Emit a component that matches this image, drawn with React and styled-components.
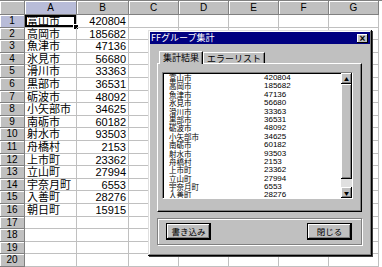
import React from "react";
import styled, { createGlobalStyle } from "styled-components";

const GlobalStyle = createGlobalStyle`
  html, body {
    margin: 0;
    padding: 0;
    background: #fff;
  }
  body {
    font-family: "Liberation Sans", "Noto Sans CJK JP", sans-serif;
    overflow: hidden;
  }
`;

const rows = [
  ["富山市", 420804],
  ["高岡市", 185682],
  ["魚津市", 47136],
  ["氷見市", 56680],
  ["滑川市", 33363],
  ["黒部市", 36531],
  ["砺波市", 48092],
  ["小矢部市", 34625],
  ["南砺市", 60182],
  ["射水市", 93503],
  ["舟橋村", 2153],
  ["上市町", 23362],
  ["立山町", 27994],
  ["宇奈月町", 6553],
  ["入善町", 28276],
  ["朝日町", 15915],
];

const columns = ["A", "B", "C", "D", "E", "F", "G"];

function App() {
  const sheetRows = Array.from({ length: 20 }, (_, i) => rows[i] || null);

  return (
    <Screen>
      <GlobalStyle />
      <Sheet>
        <Corner />
        {columns.map((c) => (
          <ColHead key={c} $active={c === "A"}>
            {c}
          </ColHead>
        ))}
        {sheetRows.map((r, i) => (
          <React.Fragment key={i}>
            <RowHead $active={i === 0}>{i + 1}</RowHead>
            <Cell $selected={i === 0}>{r ? r[0] : ""}</Cell>
            <Cell $num>{r ? r[1] : ""}</Cell>
            {[0, 1, 2, 3, 4].map((k) => (
              <Cell key={k} />
            ))}
          </React.Fragment>
        ))}
      </Sheet>

      <Dialog>
        <TitleBar>
          <span>FFグループ集計</span>
          <CloseButton>×</CloseButton>
        </TitleBar>
        <Body>
          <Tabs>
            <Tab $active>集計結果</Tab>
            <Tab>エラーリスト</Tab>
          </Tabs>
          <Panel>
            <ListBox>
              <ListItems>
                {rows.slice(0, 15).map(([name, n]) => (
                  <ListRow key={name}>
                    <span>{name}</span>
                    <span>{n}</span>
                  </ListRow>
                ))}
              </ListItems>
              <ScrollBar>
                <ArrowButton>▲</ArrowButton>
                <Track>
                  <Thumb />
                </Track>
                <ArrowButton>▼</ArrowButton>
              </ScrollBar>
            </ListBox>
          </Panel>
          <ButtonGroup>
            <Button>書き込み</Button>
            <Button>閉じる</Button>
          </ButtonGroup>
        </Body>
      </Dialog>
    </Screen>
  );
}

export default App;

// styles

const Screen = styled.div`
  position: relative;
  width: 382px;
  height: 267px;
  overflow: hidden;
  background: #fff;
`;

const Sheet = styled.div`
  display: grid;
  grid-template-columns: 25px 52px 52px repeat(5, 50px);
  grid-template-rows: 14px;
  grid-auto-rows: 12.6px;
  border-top: 1px solid #808080;
`;

const Corner = styled.div`
  background: #c0c0c0;
  border-right: 1px solid #808080;
  border-bottom: 1px solid #808080;
  box-shadow: inset 1px 1px #fff;
`;

const ColHead = styled.div`
  background: ${(p) => (p.$active ? "#b8bcd8" : "#c0c0c0")};
  border-right: 1px solid #808080;
  border-bottom: 1px solid #808080;
  box-shadow: inset 1px 1px #fff;
  font-size: 10px;
  line-height: 13px;
  text-align: center;
  color: #000;
`;

const RowHead = styled.div`
  background: ${(p) => (p.$active ? "#b8bcd8" : "#c0c0c0")};
  border-right: 1px solid #808080;
  border-bottom: 1px solid #808080;
  box-shadow: inset 1px 1px #fff;
  font-size: 10px;
  line-height: 12px;
  text-align: center;
  color: #000;
`;

const Cell = styled.div`
  position: relative;
  border-right: 1px solid #c0c0c0;
  border-bottom: 1px solid #c0c0c0;
  font-family: "Liberation Sans", "Noto Sans CJK JP", sans-serif;
  font-size: 11px;
  line-height: 12px;
  padding: 0 2px;
  text-align: ${(p) => (p.$num ? "right" : "left")};
  white-space: nowrap;
  color: #000;
  ${(p) =>
    p.$selected &&
    `
    box-shadow: inset 0 0 0 2px #000;
    &::after {
      content: "";
      position: absolute;
      right: -3px;
      bottom: -3px;
      width: 4px;
      height: 4px;
      background: #000;
      border: 1px solid #fff;
    }
  `}
`;

const Dialog = styled.div`
  position: absolute;
  left: 148px;
  top: 30px;
  width: 224px;
  height: 226px;
  box-sizing: border-box;
  padding: 2px;
  background: #c0c0c0;
  box-shadow: inset -1px -1px #000, inset 1px 1px #dfdfdf, inset -2px -2px #808080,
    inset 2px 2px #fff, 1px 1px 0 #404040;
  display: flex;
  flex-direction: column;
`;

const TitleBar = styled.div`
  height: 12px;
  background: #000080;
  color: #fff;
  display: flex;
  align-items: center;
  justify-content: space-between;
  padding: 0 2px 0 1px;
  font-size: 9px;
  font-family: "Noto Sans CJK JP", sans-serif;
  line-height: 12px;
`;

const CloseButton = styled.div`
  width: 11px;
  height: 9px;
  background: #c0c0c0;
  color: #000;
  font-family: "Liberation Sans", sans-serif;
  font-weight: bold;
  font-size: 10px;
  line-height: 9px;
  text-align: center;
  box-shadow: inset -1px -1px #000, inset 1px 1px #fff;
`;

const Body = styled.div`
  display: flex;
  flex-direction: column;
  padding: 8px 8px 0 7px;
  font-family: "Noto Sans CJK JP", sans-serif;
`;

const Tabs = styled.div`
  display: flex;
  height: 11px;
  padding-left: 2px;
  align-items: flex-end;
`;

const Tab = styled.div`
  position: relative;
  height: ${(p) => (p.$active ? "12px" : "10px")};
  margin-bottom: ${(p) => (p.$active ? "-1px" : "0")};
  padding: 0 3px;
  background: #c0c0c0;
  border-top: 1px solid #fff;
  border-left: 1px solid #fff;
  border-right: 1px solid #000;
  box-shadow: inset -1px 0 #808080;
  font-size: 9px;
  line-height: 11px;
  color: #000;
  z-index: ${(p) => (p.$active ? 1 : 0)};
`;

const Panel = styled.div`
  height: 149px;
  box-sizing: border-box;
  padding: 8px 8px 12px 4px;
  background: #c0c0c0;
  border-top: 1px solid #fff;
  border-left: 1px solid #fff;
  border-right: 1px solid #000;
  border-bottom: 1px solid #000;
  box-shadow: inset -1px -1px #808080;
`;

const ListBox = styled.div`
  display: flex;
  height: 100%;
  box-sizing: border-box;
  background: #fff;
  border-top: 1px solid #808080;
  border-left: 1px solid #808080;
  border-right: 1px solid #fff;
  border-bottom: 1px solid #fff;
  box-shadow: inset 1px 1px #000;
`;

const ListItems = styled.div`
  flex: 1;
  padding: 1px 0 0 6px;
  overflow: hidden;
`;

const ListRow = styled.div`
  display: grid;
  grid-template-columns: 95px 1fr;
  font-size: 7.5px;
  line-height: 8.4px;
  height: 8.4px;
  color: #000;
  span:last-child {
    font-family: "Liberation Sans", sans-serif;
    font-size: 8px;
  }
`;

const ScrollBar = styled.div`
  width: 11px;
  display: flex;
  flex-direction: column;
  background: #e0e0e0;
`;

const ArrowButton = styled.div`
  height: 11px;
  background: #c0c0c0;
  box-shadow: inset -1px -1px #000, inset 1px 1px #fff, inset -2px -2px #808080;
  font-size: 5px;
  line-height: 11px;
  text-align: center;
  color: #000;
`;

const Track = styled.div`
  flex: 1;
  display: flex;
  flex-direction: column;
  padding-bottom: 8px;
`;

const Thumb = styled.div`
  flex: 1;
  background: #c0c0c0;
  box-shadow: inset -1px -1px #000, inset 1px 1px #fff, inset -2px -2px #808080;
`;

const ButtonGroup = styled.div`
  margin-top: 6px;
  height: 27px;
  box-sizing: border-box;
  display: flex;
  align-items: center;
  justify-content: space-between;
  padding: 0 9px 0 8px;
  border: 1px solid #808080;
  box-shadow: inset 1px 1px #fff, 1px 1px #fff;
`;

const Button = styled.div`
  width: 45px;
  height: 17px;
  box-sizing: border-box;
  background: #c0c0c0;
  border: 1px solid #000;
  box-shadow: inset -1px -1px #000, inset 1px 1px #fff, inset -2px -2px #808080;
  font-size: 8.5px;
  line-height: 15px;
  text-align: center;
  color: #000;
`;
